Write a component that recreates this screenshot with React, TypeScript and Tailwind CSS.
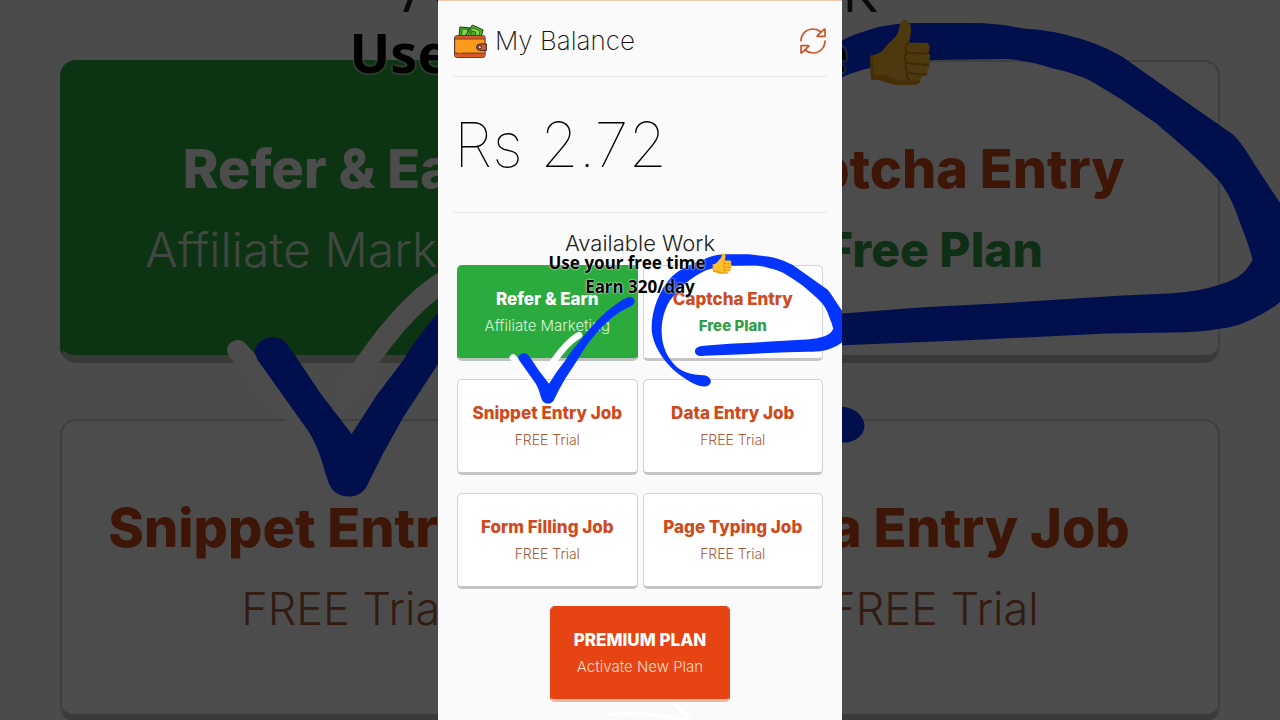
import clsx from "clsx";

type Tone = "plain" | "green" | "orange" | "free";

type Job = { title: string; note: string; tone: Tone };

const JOBS: Job[] = [
  { title: "Refer & Earn", note: "Affiliate Marketing", tone: "green" },
  { title: "Captcha Entry", note: "Free Plan", tone: "free" },
  { title: "Snippet Entry Job", note: "FREE Trial", tone: "plain" },
  { title: "Data Entry Job", note: "FREE Trial", tone: "plain" },
  { title: "Form Filling Job", note: "FREE Trial", tone: "plain" },
  { title: "Page Typing Job", note: "FREE Trial", tone: "plain" },
];

const CARD_TONES: Record<Tone, string> = {
  plain: "bg-white border-[#d2d2d2] border-b-[#c4c4c4] text-[#cf4a1c]",
  free: "bg-white border-[#d2d2d2] border-b-[#c4c4c4] text-[#cf4a1c]",
  green: "bg-[#2bab3d] border-[#2bab3d] border-b-[#b9c4ba] text-white",
  orange: "bg-[#e64412] border-[#e64412] border-b-[#eab8a6] text-white",
};

const NOTE_TONES: Record<Tone, string> = {
  plain: "font-light text-[#a85a38]",
  free: "font-extrabold text-[#2f9e45]",
  green: "font-light text-[#d8f2da]",
  orange: "font-light text-[#fbdccb]",
};

function noteSize(tone: Tone, large: boolean) {
  if (tone === "plain") return large ? "text-[45px]" : "text-[14px]";
  return large ? "text-[48px]" : "text-[15px]";
}

function JobCard({ job, large = false }: { job: Job; large?: boolean }) {
  return (
    <button
      type="button"
      className={clsx(
        "flex flex-col items-center whitespace-nowrap",
        large
          ? "rounded-2xl border-2 border-b-8 pt-[67px] pb-16"
          : "rounded-[5px] border border-b-[3px] pt-[21px] pb-5",
        CARD_TONES[job.tone]
      )}
    >
      <span className={clsx("font-extrabold", large ? "text-[54px] leading-[80px]" : "text-[17px] leading-6")}>
        {job.title}
      </span>
      <span
        className={clsx(
          noteSize(job.tone, large),
          large ? "leading-[82px]" : "mt-[3px] leading-6",
          NOTE_TONES[job.tone]
        )}
      >
        {job.note}
      </span>
    </button>
  );
}

function WalletIcon() {
  return (
    <svg className="h-[34px] w-[33px] shrink-0" viewBox="47 77 101 104" fill="none" strokeLinejoin="round">
      <g stroke="#12350f" strokeWidth="3">
        <path d="M65 86l32 3-3 30H62z" fill="#4caf2a" />
        <path d="M72 92l18 1-3 20H70z" fill="#7ed348" strokeWidth="2" />
        <path d="M103 80l33 15-6 22H80z" fill="#58bd2c" />
        <path d="M104 88l23 10-4 18H89z" fill="#7ed348" strokeWidth="2" />
        <circle cx="106" cy="107" r="8" fill="#48a827" strokeWidth="2" />
      </g>
      <path d="M49 119q0-6 6-6h83q4 0 4 5v55q0 6-6 6H55q-6 0-6-6z" fill="#fb9a1b" stroke="#35201e" strokeWidth="3" />
      <path d="M51 117q0-3 4-3h82q3 0 3 3v5H51z" fill="#d9542b" />
      <path d="M51 166h89v7q0 4-4 4H55q-4 0-4-4z" fill="#d9542b" />
      <path d="M50 123h91M50 166h14M69 166h72" stroke="#35201e" strokeWidth="2" />
      <path d="M146 138h-20q-10 1-10 10t10 10h20z" fill="#dc5630" stroke="#35201e" strokeWidth="3" />
      <circle cx="126" cy="148" r="5" fill="#f5d6bd" stroke="#35201e" strokeWidth="3" />
    </svg>
  );
}

function RefreshIcon() {
  return (
    <svg
      className="size-[26px]"
      viewBox="0 0 78 78"
      fill="none"
      stroke="#cb5428"
      strokeWidth="5"
      strokeLinecap="round"
      strokeLinejoin="round"
    >
      <path d="M3 38C3 19 19 3 39 3c10 0 18 4 24 9" />
      <path d="M75 39c0 20-16 36-36 36-10 0-18-4-24-9" />
      <path d="M75 4v21H53c-2 0-2-1-1-2L72 4c2-1 3-1 3 0z" />
      <path d="M3 74V53h22c2 0 2 1 1 2L6 74c-2 1-3 1-3 0z" />
    </svg>
  );
}

function ThumbIcon({ className }: { className: string }) {
  return (
    <svg className={className} viewBox="90 54 192 208" aria-label="thumbs up">
      <path
        d="M94 168q30-2 46-26 14-17 28-29 14-13 17-38 2-18 15-18 18 2 20 25 1 17-6 46h52q13 2 12 17 0 8-4 12 7 6 6 16-1 7-5 10 5 7 3 16-2 8-7 10 2 6-1 13-3 9-14 9l-6 12q-4 15-20 15h-46q-22 0-40-9-17-7-44-7-6-32-6-74z"
        fill="#fdbf2d"
      />
      <path d="M94 168q-2 44 3 75 28-2 47 8 22 10 44 7h42q17 0 20-14-60 8-92-10-30-10-50-5-8-24-5-63z" fill="#ee9a1c" />
      <path
        d="M214 128q-18 10-8 28 6 4 14 4M274 160q-30 2-66-2M272 195q-30 2-66-5M268 226q-26 2-62-8M205 158q-8 16 1 30-6 18 2 30-4 15 6 26"
        fill="none"
        stroke="#d98512"
        strokeWidth="6"
        strokeLinecap="round"
      />
    </svg>
  );
}

// Freehand marker strokes, drawn three units to the pixel
function MarkerStrokes({ viewBox }: { viewBox: string }) {
  return (
    <svg
      className="pointer-events-none absolute inset-0 size-full"
      viewBox={viewBox}
      preserveAspectRatio="xMidYMid slice"
      fill="none"
    >
      <g transform="translate(0 660)">
        <path
          d="M225 411L298 492M423 344C392 362 362 397 329 450"
          stroke="#fff"
          strokeWidth="20"
          strokeLinecap="round"
        />
        <path
          d="M241 413C241 400 262 393 271 404L281 418L303 451L333 490L357 453L382 420C392 403 402 391 414 376C440 343 470 305 505 274C530 253 553 237 570 230C584 226 594 238 588 249C582 259 560 264 540 278C500 306 470 341 440 383L414 425L382 474L363 508L347 540C340 553 317 553 311 536L308 527C304 512 300 501 293 489L276 465L244 420Z"
          fill="#0435ff"
        />
        <path
          fillRule="evenodd"
          d="M798 117C807 112 817 109 827 106C842 102 858 101 874 101H921C938 101 953 103 969 106C985 107 1001 109 1016 114C1033 118 1048 125 1063 133L1114 169L1168 207C1177 216 1183 227 1190 238L1212 271L1232 310Q1238 342 1212 365C1205 371 1198 375 1190 379C1180 384 1169 389 1158 390C1142 393 1127 394 1111 394L1048 395L921 401L798 406C780 409 770 402 771 391C772 381 782 378 798 376L874 370L953 366L1063 359L1105 357C1119 356 1131 355 1143 352C1154 349 1166 346 1174 340C1179 336 1183 331 1186 325C1183 313 1179 302 1174 290C1169 274 1162 259 1152 248C1135 229 1114 213 1095 196L1063 174L1035 157C1024 151 1011 147 997 144C983 139 968 136 953 135L884 136C864 137 845 138 827 143C817 145 806 148 798 152C760 170 720 204 696 240C680 265 670 300 671 335C672 380 689 411 714 437C735 456 762 463 797 464C823 467 826 493 803 498C779 500 744 478 715 455C675 422 642 370 641 325C640 270 664 210 698 172C727 143 760 130 798 117Z"
          fill="#0435ff"
        />
        <path d="M515 1482C600 1476 680 1484 745 1500M710 1450L750 1490" stroke="#fff" strokeWidth="12" strokeLinecap="round" />
      </g>
    </svg>
  );
}

function Backdrop() {
  return (
    <div className="absolute inset-0 overflow-hidden bg-[#fafafa]" inert>
      <p className="-mt-[49px] mb-[37px] text-center text-[70px] leading-[72px] font-light text-[#222]">
        Available Work
      </p>
      <div className="grid grid-cols-2 gap-x-4 gap-y-[56px] px-[60px]">
        {JOBS.slice(0, 4).map((job) => (
          <JobCard key={job.title} job={job} large />
        ))}
      </div>
      <MarkerStrokes viewBox="0 739 1212 682" />
      <p className="absolute inset-x-0 top-[14px] flex items-center justify-center gap-5 font-['Noto_Sans',sans-serif] text-[54px] leading-[76px] font-bold whitespace-nowrap text-black [text-shadow:0_0_3px_#fff,0_0_3px_#fff]">
        Use your free time
        <ThumbIcon className="h-[67px] w-[62px]" />
      </p>
      <div className="absolute inset-0 bg-black/70" />
    </div>
  );
}

export default function App() {
  return (
    <div className="relative h-screen overflow-hidden font-['Inter',sans-serif]">
      <Backdrop />

      <main className="relative mx-auto h-full w-full max-w-[404px] overflow-hidden border-t border-[#efc9ae] bg-[#fafafa]">
        <div className="px-4">
          <header className="flex h-[76px] items-center justify-between border-b border-[#e4e4e4] pt-1">
            <div className="flex items-center gap-2">
              <WalletIcon />
              <h1 className="text-[26px] leading-8 font-extralight text-[#111]">My Balance</h1>
            </div>
            <button type="button" aria-label="Refresh balance">
              <RefreshIcon />
            </button>
          </header>
          <p className="border-b border-[#e4e4e4] py-8 text-[62px] leading-[71px] font-thin text-black">Rs 2.72</p>
        </div>

        <h2 className="pt-4 pb-2 text-center text-[22px] leading-7 font-light text-[#222]">Available Work</h2>

        <div className="grid grid-cols-2 gap-x-[5px] gap-y-[18px] px-[19px]">
          {JOBS.map((job) => (
            <JobCard key={job.title} job={job} />
          ))}
        </div>
        <div className="mx-auto mt-[17px] grid w-[180px]">
          <JobCard job={{ title: "PREMIUM PLAN", note: "Activate New Plan", tone: "orange" }} />
        </div>

        <MarkerStrokes viewBox="0 0 1212 2160" />

        {/* caption laid over the cards */}
        <div className="pointer-events-none absolute inset-x-0 top-[250px] flex flex-col items-center font-['Noto_Sans',sans-serif] text-[17px] leading-6 font-bold text-black [text-shadow:0_0_1px_#fff,0_0_2px_#fff]">
          <p className="flex items-center gap-[6px]">
            Use your free time
            <ThumbIcon className="h-[21px] w-5" />
          </p>
          <p>Earn 320/day</p>
        </div>
      </main>
    </div>
  );
}
